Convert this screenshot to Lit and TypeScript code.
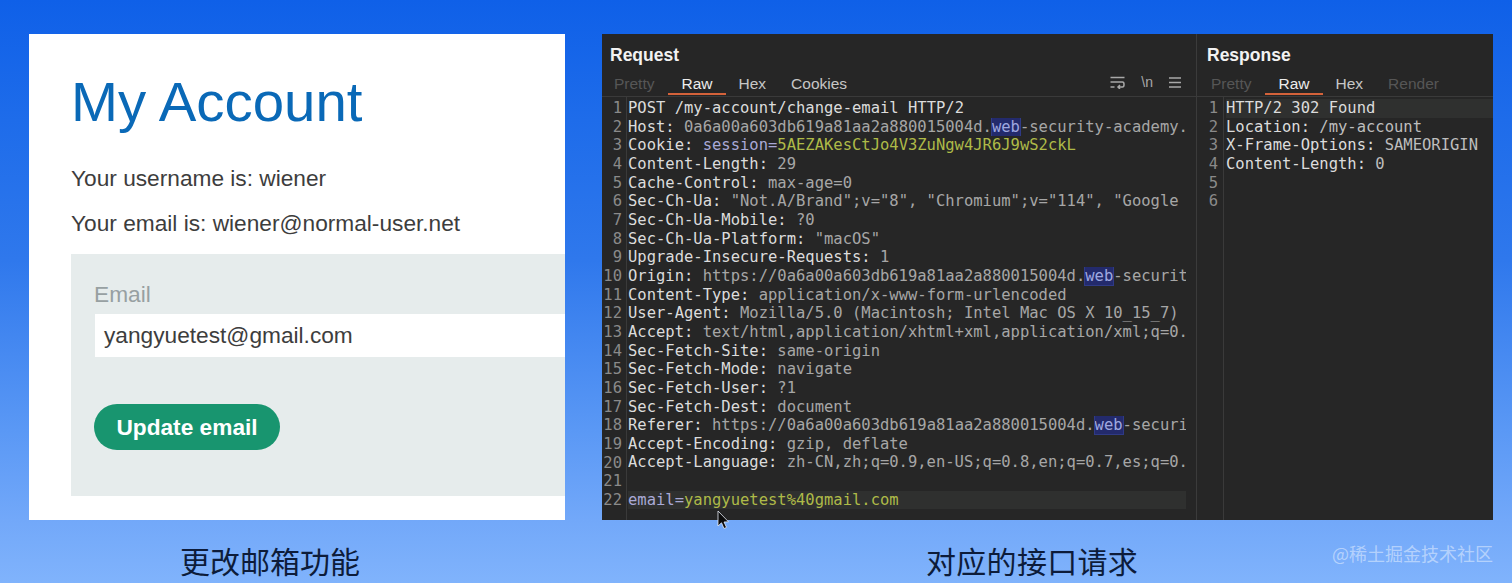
import { LitElement, html, css, svg } from "lit";
import { customElement } from "lit/decorators.js";

type Seg = [string, string];
type Line = Seg[];

const k = (t: string): Seg => ["key", t];
const v = (t: string): Seg => ["val", t];
const a = (t: string): Seg => ["attr", t];
const g = (t: string): Seg => ["green", t];
const h = (t: string): Seg => ["hl", t];
const HOST = "0a6a00a603db619a81aa2a880015004d.";

const REQUEST: Line[] = [
  [k("POST "), k("/my-account/change-email"), k(" HTTP/2")],
  [k("Host: "), v(HOST), h("web"), v("-security-academy.")],
  [k("Cookie: "), a("session="), g("5AEZAKesCtJo4V3ZuNgw4JR6J9wS2ckL")],
  [k("Content-Length: "), v("29")],
  [k("Cache-Control: "), v("max-age=0")],
  [k("Sec-Ch-Ua: "), v('"Not.A/Brand";v="8", "Chromium";v="114", "Google')],
  [k("Sec-Ch-Ua-Mobile: "), v("?0")],
  [k("Sec-Ch-Ua-Platform: "), v('"macOS"')],
  [k("Upgrade-Insecure-Requests: "), v("1")],
  [k("Origin: "), v("https://" + HOST), h("web"), v("-securit")],
  [k("Content-Type: "), v("application/x-www-form-urlencoded")],
  [k("User-Agent: "), v("Mozilla/5.0 (Macintosh; Intel Mac OS X 10_15_7)")],
  [k("Accept: "), v("text/html,application/xhtml+xml,application/xml;q=0.")],
  [k("Sec-Fetch-Site: "), v("same-origin")],
  [k("Sec-Fetch-Mode: "), v("navigate")],
  [k("Sec-Fetch-User: "), v("?1")],
  [k("Sec-Fetch-Dest: "), v("document")],
  [k("Referer: "), v("https://" + HOST), h("web"), v("-securi")],
  [k("Accept-Encoding: "), v("gzip, deflate")],
  [k("Accept-Language: "), v("zh-CN,zh;q=0.9,en-US;q=0.8,en;q=0.7,es;q=0.")],
  [],
  [a("email="), g("yangyuetest%40gmail.com")],
];

const RESPONSE: Line[] = [
  [k("HTTP/2 302 Found")],
  [k("Location: "), v("/my-account")],
  [k("X-Frame-Options: "), v("SAMEORIGIN")],
  [k("Content-Length: "), v("0")],
  [],
  [],
];

const wrapIcon = svg`<svg class="ico" width="15" height="13" viewBox="0 0 15 13" fill="none" stroke="#a8a8a8" stroke-width="1.500"><path d="M0.500 1.500h14M0.500 6h12c2 0 2 5 0 5H8M10 9l-2 2 2 2M0.500 11h4"/></svg>`;
const menuIcon = svg`<svg class="ico" width="12" height="11" viewBox="0 0 12 11" fill="none" stroke="#a8a8a8" stroke-width="1.600"><path d="M0 1h12M0 5.500h12M0 10h12"/></svg>`;

@customElement("app-root")
export class AppRoot extends LitElement {
  static styles = css`
    :host {
      display: block;
      position: relative;
      width: 1512px;
      height: 583px;
      overflow: hidden;
      background: linear-gradient(180deg, #0f60e8 0, #1e6cea 120px, #2f78ec 260px, #5a98f5 430px, #72a8f9 520px, #80b3fc 583px);
      font-family: "Liberation Sans", Arial, sans-serif;
    }
    .stage {
      display: flex;
      gap: 37px;
      padding: 34px 0 0 29px;
      height: 486px;
    }
    .card {
      flex: 0 0 536px;
      height: 486px;
      box-sizing: border-box;
      background: #fff;
      padding: 35px 0 24px 42px;
      display: flex;
      flex-direction: column;
      color: #3d3d3d;
    }
    h1 {
      margin: 0;
      font-weight: 400;
      font-size: 56.400px;
      line-height: 66px;
      color: #0a69b7;
    }
    .card p {
      margin: 0;
      font-size: 22.700px;
      line-height: 26px;
    }
    .card p.user { margin-top: 30px; }
    .card p.mail { margin-top: 19px; }
    .formbox {
      margin-top: 18px;
      flex: 1;
      background: #e6ecec;
      padding: 27px 0 0 23px;
      display: flex;
      flex-direction: column;
    }
    .lbl {
      font-size: 22.700px;
      line-height: 26px;
      color: #97a0a2;
    }
    .field {
      margin: 7px 0 0 1px;
      height: 43px;
      background: #fff;
      display: flex;
      align-items: center;
      padding-left: 9px;
      font-size: 22.700px;
      color: #3d3d3d;
    }
    .btn {
      margin-top: 47px;
      align-self: flex-start;
      width: 186px;
      height: 46px;
      border-radius: 23px;
      background: #18956f;
      color: #fff;
      font-weight: 700;
      font-size: 22.700px;
      display: flex;
      align-items: center;
      justify-content: center;
    }
    .burp {
      flex: 0 0 891px;
      height: 486px;
      background: #262626;
      display: flex;
      color: #d8d8d8;
    }
    .pane {
      display: flex;
      flex-direction: column;
      min-width: 0;
    }
    .pane.req { flex: 0 0 595px; border-right: 1px solid #3b3b3b; box-sizing: border-box; }
    .pane.res { flex: 1; }
    .pane h2 {
      margin: 0;
      height: 38px;
      box-sizing: border-box;
      padding: 4px 0 0 8px;
      display: flex;
      align-items: center;
      font-size: 17.500px;
      font-weight: 700;
      color: #f2f2f2;
      flex: none;
    }
    .pane.res h2 { padding-left: 10px; }
    .tabs {
      flex: none;
      height: 25px;
      box-sizing: border-box;
      display: flex;
      align-items: flex-start;
      border-bottom: 1px solid #3a3a3a;
      font-size: 15.500px;
    }
    .res .tabs { padding-left: 2px; }
    .tab {
      height: 23px;
      display: flex;
      align-items: center;
      color: #c6c6c6;
      padding: 0 13px;
      position: relative;
    }
    .tab:first-child { padding: 0 14px 0 12px; }
    .tab:nth-child(3) { padding-right: 12px; }
    .tab.off { color: #565656; }
    .tab.on { color: #ececec; }
    .tab.on::after {
      content: "";
      position: absolute;
      left: 0;
      right: 0;
      bottom: 0;
      height: 2px;
      background: #d4623a;
    }
    .tools {
      margin-left: auto;
      height: 20px;
      display: flex;
      align-items: center;
      gap: 16px;
      padding-right: 15px;
      color: #a8a8a8;
      font-size: 14px;
    }
    .ico { display: block; }
    .code {
      flex: 1;
      min-height: 0;
      display: flex;
      font-family: "DejaVu Sans Mono", monospace;
      font-size: 15.500px;
      line-height: 18.670px;
    }
    .gutter {
      flex: none;
      width: 25px;
      box-sizing: border-box;
      border-right: 1px solid #3a3a3a;
      padding: 2px 4px 0 0;
      text-align: right;
      color: #8a8a8a;
    }
    .res .gutter { width: 27px; padding-right: 5px; }
    .lines { flex: 1; min-width: 0; padding: 2px 0 0 1px; }
    .req .lines { padding-right: 10px; }
    .res .lines { padding-left: 2px; }
    .line {
      height: 18.670px;
      white-space: pre;
      overflow: hidden;
    }
    .line.cur { background: #2f302f; }
    .key { color: #dcdcdc; }
    .val { color: #a6a6a6; }
    .attr { color: #a9a9d6; }
    .green { color: #aeba48; }
    .hl { color: #9fa8e0; background: #232a6c; outline: 1px solid #2f3a86; }
    .res .val { color: #bdbdbd; }
    .captions {
      display: flex;
      padding-top: 19px;
      height: 42px;
    }
    .captions div {
      font-size: 30px;
      line-height: 42px;
      color: #0d1c3a;
      font-family: "Noto Sans CJK SC", sans-serif;
      white-space: nowrap;
    }
    .c1 { margin-left: 180px; }
    .c2 { margin-left: 566px; letter-spacing: 0.300px; }
    .mark {
      position: absolute;
      right: 19px;
      top: 542px;
      font-size: 18px;
      line-height: 22px;
      white-space: nowrap;
      color: rgba(255, 255, 255, 0.45);
      font-family: "Noto Sans CJK SC", sans-serif;
    }
    .cursor {
      position: absolute;
      left: 712px;
      top: 507px;
    }
  `;

  private pane(cls: string, title: string, tabs: [string, string][], lines: Line[], cur: number, tools = false) {
    return html`<section class="pane ${cls}">
      <h2>${title}</h2>
      <div class="tabs">
        ${tabs.map(([t, c]) => html`<span class="tab ${c}">${t}</span>`)}
        ${tools ? html`<span class="tools">${wrapIcon}<span>\\n</span>${menuIcon}</span>` : ""}
      </div>
      <div class="code">
        <div class="gutter">${lines.map((_, i) => html`<div>${i + 1}</div>`)}</div>
        <div class="lines">
          ${lines.map(
            (l, i) => html`<div class="line ${i === cur ? "cur" : ""}">${l.map(([c, t]) => html`<span class=${c}>${t}</span>`)}</div>`
          )}
        </div>
      </div>
    </section>`;
  }

  render() {
    return html`
      <div class="stage">
        <div class="card">
          <h1>My Account</h1>
          <p class="user">Your username is: wiener</p>
          <p class="mail">Your email is: wiener@normal-user.net</p>
          <div class="formbox">
            <div class="lbl">Email</div>
            <div class="field">yangyuetest@gmail.com</div>
            <div class="btn">Update email</div>
          </div>
        </div>
        <div class="burp">
          ${this.pane("req", "Request", [["Pretty", "off"], ["Raw", "on"], ["Hex", ""], ["Cookies", ""]], REQUEST, 21, true)}
          ${this.pane("res", "Response", [["Pretty", "off"], ["Raw", "on"], ["Hex", ""], ["Render", "off"]], RESPONSE, 0)}
        </div>
      </div>
      <div class="captions">
        <div class="c1">更改邮箱功能</div>
        <div class="c2">对应的接口请求</div>
      </div>
      <div class="mark">@稀土掘金技术社区</div>
      <svg class="cursor" width="18" height="24" viewBox="0 0 18 24">
        <path d="M6 4 6 19 9.500 15.800 12 21.500 14.500 20.400 12 15 16.500 14.800Z" fill="#0b0b0b" stroke="#e8eef8" stroke-width="0.800"/>
      </svg>
    `;
  }
}
